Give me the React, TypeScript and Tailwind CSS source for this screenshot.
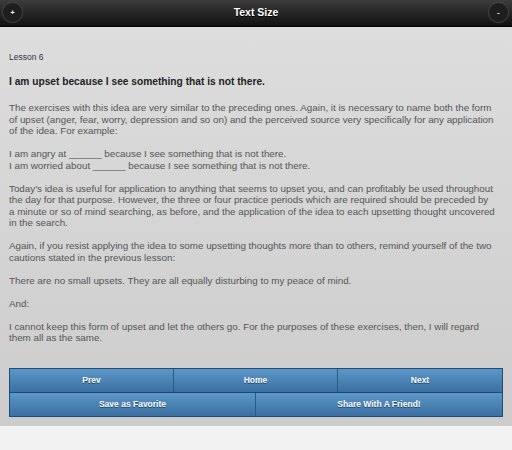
import React from "react";

export default function App() {
  return (
    <div className="w-[512px] h-[450px] bg-[#f2f2f2] font-['Liberation_Sans',Arial,sans-serif] overflow-hidden">
      <header className="relative h-[27px] bg-gradient-to-b from-[#3c3c3c] to-[#111111] border-b border-[#000] flex items-center justify-center">
        <div className="absolute left-[2px] top-[2px] w-[21px] h-[21px] rounded-full bg-[#1e1e1e] border border-[#3e3e3e] shadow-[0_0_1px_rgba(255,255,255,0.15)] flex items-center justify-center text-white text-[7px] font-bold leading-none">
          +
        </div>
        <h1 className="text-white text-[10.5px] font-bold leading-none [text-shadow:0_1px_0_#000] -mt-[2px]">
          Text Size
        </h1>
        <div className="absolute right-[3px] top-[2px] w-[21px] h-[21px] rounded-full bg-[#1e1e1e] border border-[#3e3e3e] shadow-[0_0_1px_rgba(255,255,255,0.15)] flex items-center justify-center text-white text-[7px] font-bold leading-none">
          -
        </div>
      </header>
      <main className="bg-gradient-to-b from-[#dddddd] to-[#cccccc] px-[9px] pt-[25px] pb-[9px]">
        <p className="text-[8.5px] leading-[10px] text-[#333344]">Lesson 6</p>
        <h2 className="mt-[13px] text-[10.2px] leading-[13px] font-bold text-[#222]">
          I am upset because I see something that is not there.
        </h2>
        <div className="mt-[14px] pr-[7px] text-[9.8px] leading-[11.5px] text-[#555]">
          <p className="mb-[11.5px]">
            The exercises with this idea are very similar to the preceding ones. Again, it is necessary to name both the form of upset (anger, fear, worry, depression and so on) and the perceived source very specifically for any application of the idea. For example:
          </p>
          <p className="mb-[11.5px]">
            I am angry at ______ because I see something that is not there.
            <br />
            I am worried about ______ because I see something that is not there.
          </p>
          <p className="mb-[11.5px]">
            Today's idea is useful for application to anything that seems to upset you, and can profitably be used throughout the day for that purpose. However, the three or four practice periods which are required should be preceded by a minute or so of mind searching, as before, and the application of the idea to each upsetting thought uncovered in the search.
          </p>
          <p className="mb-[11.5px]">
            Again, if you resist applying the idea to some upsetting thoughts more than to others, remind yourself of the two cautions stated in the previous lesson:
          </p>
          <p className="mb-[11.5px]">
            There are no small upsets. They are all equally disturbing to my peace of mind.
          </p>
          <p className="mb-[11.5px]">And:</p>
          <p>
            I cannot keep this form of upset and let the others go. For the purposes of these exercises, then, I will regard them all as the same.
          </p>
        </div>
        <div className="mt-[24px] border border-[#1f4c74] text-white text-[8.5px] font-bold [text-shadow:0_1px_0_#1d446a]">
          <div className="grid grid-cols-3 border-b border-[#1f4a70]">
            {["Prev", "Home", "Next"].map((t, i) => (
              <div
                key={t}
                className={`h-[23px] flex items-center justify-center bg-gradient-to-b from-[#5c98c7] to-[#3b6fa1] ${i < 2 ? "border-r border-[#2a5c88]" : ""}`}
              >
                {t}
              </div>
            ))}
          </div>
          <div className="grid grid-cols-2">
            {["Save as Favorite", "Share With A Friend!"].map((t, i) => (
              <div
                key={t}
                className={`h-[23px] flex items-center justify-center bg-gradient-to-b from-[#5c98c7] to-[#3b6fa1] ${i < 1 ? "border-r border-[#2a5c88]" : ""}`}
              >
                {t}
              </div>
            ))}
          </div>
        </div>
      </main>
    </div>
  );
}
